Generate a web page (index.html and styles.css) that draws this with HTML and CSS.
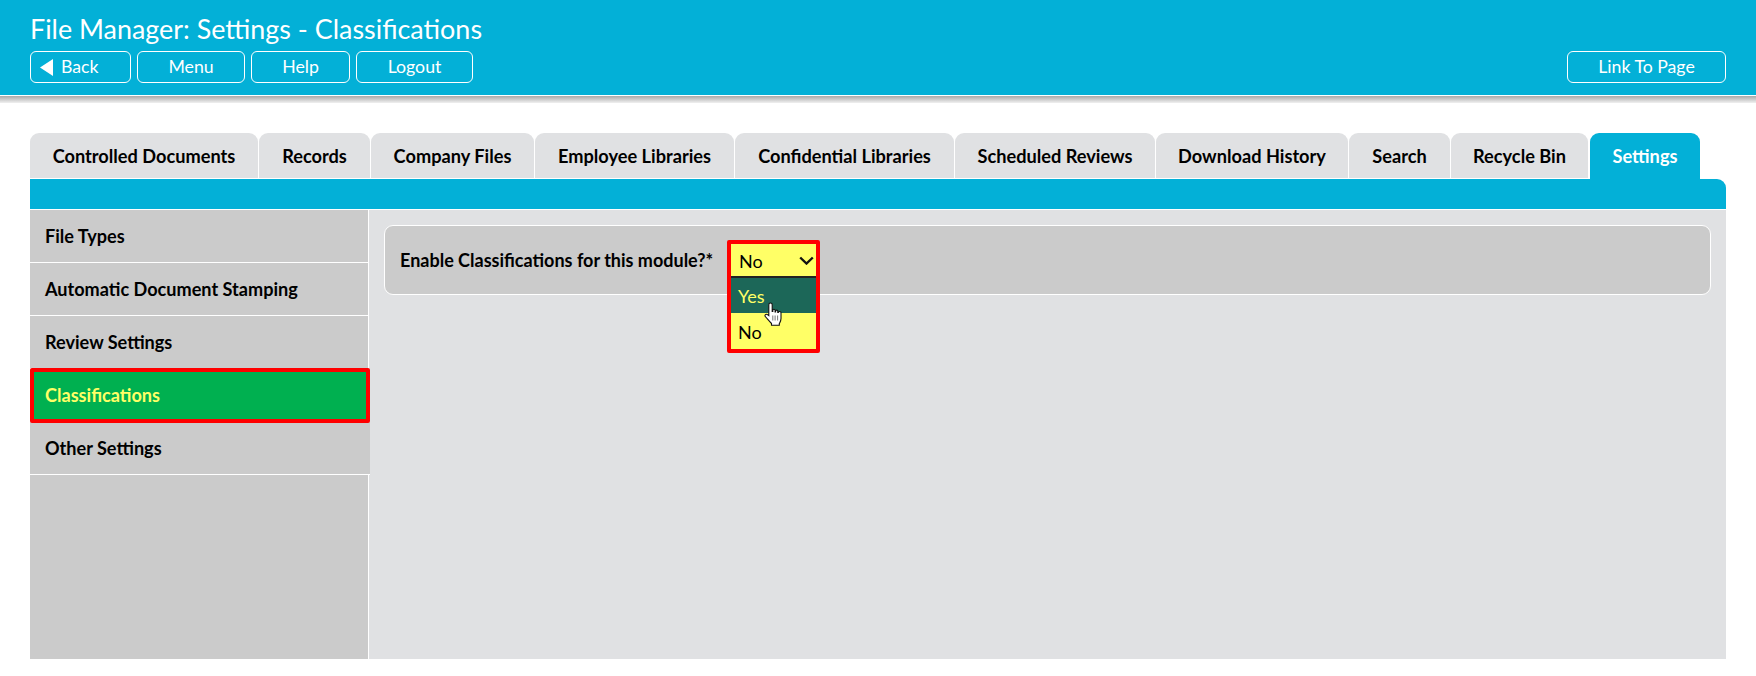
FILE: index.html
```html
<!DOCTYPE html>
<html lang="en">
<head>
<meta charset="utf-8">
<title>File Manager: Settings - Classifications</title>
<link rel="stylesheet" href="styles.css">
</head>
<body>
<header class="header">
  <h1 class="title">File Manager: Settings - Classifications</h1>
  <div class="actions">
    <a class="btn btn-back"><svg class="back-icon" width="13" height="17" viewBox="0 0 13 17"><path d="M13 0V17L0 8.5Z" fill="#fff"/></svg>Back</a>
    <a class="btn btn-menu">Menu</a>
    <a class="btn btn-help">Help</a>
    <a class="btn btn-logout">Logout</a>
    <a class="btn btn-link">Link To Page</a>
  </div>
</header>
<div class="shadow"></div>
<main class="page">
  <nav class="tabs">
    <a class="tab t1">Controlled Documents</a>
    <a class="tab t2">Records</a>
    <a class="tab t3">Company Files</a>
    <a class="tab t4">Employee Libraries</a>
    <a class="tab t5">Confidential Libraries</a>
    <a class="tab t6">Scheduled Reviews</a>
    <a class="tab t7">Download History</a>
    <a class="tab t8">Search</a>
    <a class="tab t9">Recycle Bin</a>
    <a class="tab tab-active">Settings</a>
  </nav>
  <div class="bar"></div>
  <div class="content">
    <aside class="side">
      <a class="side-item">File Types</a>
      <a class="side-item">Automatic Document Stamping</a>
      <a class="side-item">Review Settings</a>
      <a class="side-item side-active">Classifications</a>
      <a class="side-item">Other Settings</a>
    </aside>
    <section class="main">
      <div class="panel">
        <label class="label">Enable Classifications for this module?*</label>
        <div class="select-wrap">
          <div class="select">No<svg class="chev" width="15" height="9" viewBox="0 0 15 9"><path d="M1.200 1.500L7.500 7.500L13.800 1.500" fill="none" stroke="#111" stroke-width="2.400"/></svg></div>
          <ul class="options">
            <li class="opt opt-hover">Yes</li>
            <li class="opt">No</li>
          </ul>
          <svg class="cursor" width="18" height="24" viewBox="0 0 18 24"><path d="M6.500 1C7.600 1 8.200 1.800 8.200 2.800V9.500H8.800V8.400C8.800 6.900 11.100 6.900 11.100 8.400V10H11.600V9.200C11.600 7.800 13.800 7.800 13.800 9.300V10.400H14.300C14.300 9.100 17 9.200 17 10.700V16.500C17 19 15.900 20.300 15.300 21.700V23.200H7.500V21.500C5.500 19.500 3.500 17 1.400 14.700C.2 13.100 2 11.500 3.600 12.700L4.800 13.700V2.800C4.800 1.800 5.400 1 6.500 1Z" fill="#fff" stroke="#111" stroke-width="1.100"/><path d="M8.800 13.500V18.500M11.100 13.500V18.500M13.600 13.500V18.500" stroke="#555" stroke-width=".8"/></svg>
        </div>
      </div>
    </section>
  </div>
</main>
</body>
</html>
```
FILE: styles.css
```css
* { box-sizing: border-box; }
html, body { margin: 0; padding: 0; height: 676px; overflow: hidden; background: #fff; }
body { font-family: Lato, "Open Sans", sans-serif; color: #000; }
.header { height: 96px; background: #03b0d7; border-bottom: 1px solid #fff; padding: 14px 30px 0; }
.title { margin: 0; font-size: 26.900px; line-height: 30px; font-weight: 400; color: #fff; }
.actions { display: flex; gap: 6px; margin-top: 7px; }
.btn { height: 32px; border: 1px solid #fff; border-radius: 6px; color: #fff; font-size: 17.700px; line-height: 30px; display: flex; align-items: center; justify-content: center; }
.btn-back { width: 101px; justify-content: flex-start; padding-left: 9px; }
.back-icon { margin-right: 8px; }
.btn-menu { width: 108px; }
.btn-help { width: 99px; }
.btn-logout { width: 117px; }
.btn-link { width: 159px; margin-left: auto; }
.shadow { height: 7px; background: linear-gradient(#a9a9a9, #f0f0f0); }
.page { padding: 30px 30px 0 30px; }
.tabs { display: flex; gap: 1px; height: 46px; }
.tab { height: 45px; background: #e0e1e3; border-radius: 9px 9px 0 0; font-weight: 700; font-size: 18.200px; display: flex; align-items: center; justify-content: center; }
.t1 { width: 228px; }
.t2 { width: 111px; }
.t3 { width: 163px; }
.t4 { width: 199px; }
.t5 { width: 219px; }
.t6 { width: 200px; }
.t7 { width: 192px; }
.t8 { width: 101px; }
.t9 { width: 137px; margin-right: 1px; }
.tab-active { width: 110px; height: 46px; background: #03b0d7; color: #fff; }
.bar { height: 30px; background: #03b0d7; border-radius: 0 9px 0 0; }
.content { display: flex; height: 449px; margin-top: 1px; background: #e0e1e3; }
.side { width: 339px; flex: none; border-right: 1px solid #fff; background: #cbcbcb; display: flex; flex-direction: column; }
.side-item { height: 53px; padding-left: 15px; font-weight: 700; font-size: 18.100px; line-height: 53px; border-bottom: 1px solid #fff; background: #cbcbcb; }
.side-item:last-child { margin-right: -2px; }
.side-active { height: 55px; margin: -1px -2px -1px 0; position: relative; border: 4px solid #f00; border-radius: 2px; background: #00b050; color: #ffff66; padding-left: 11px; line-height: 46px; }
.main { flex: 1; padding: 15px 15px 0 15px; }
.panel { height: 70px; background: #cbcbcb; border: 1px solid #fff; border-radius: 9px; display: flex; align-items: flex-start; padding-left: 15px; }
.label { font-size: 18px; font-weight: 700; line-height: 32px; margin-top: 18px; width: 327px; }
.select-wrap { position: relative; width: 93px; height: 113px; margin-top: 14px; border: 4px solid #f00; border-radius: 2px; background: #ffff66; flex: none; z-index: 2; }
.select { height: 34px; padding: 2px 0 0 8px; line-height: 30px; font-size: 18px; display: flex; justify-content: space-between; align-items: center; border-bottom: 2px solid #222; }
.chev { margin-right: 2px; margin-top: -2px; }
.options { list-style: none; margin: 0; padding: 0; }
.opt { height: 35px; line-height: 37px; padding-left: 7px; font-size: 18px; }
.opt + .opt { line-height: 39px; }
.opt-hover { background: #1c6758; color: #ffff66; }
.cursor { position: absolute; left: 33px; top: 58px; }
```
